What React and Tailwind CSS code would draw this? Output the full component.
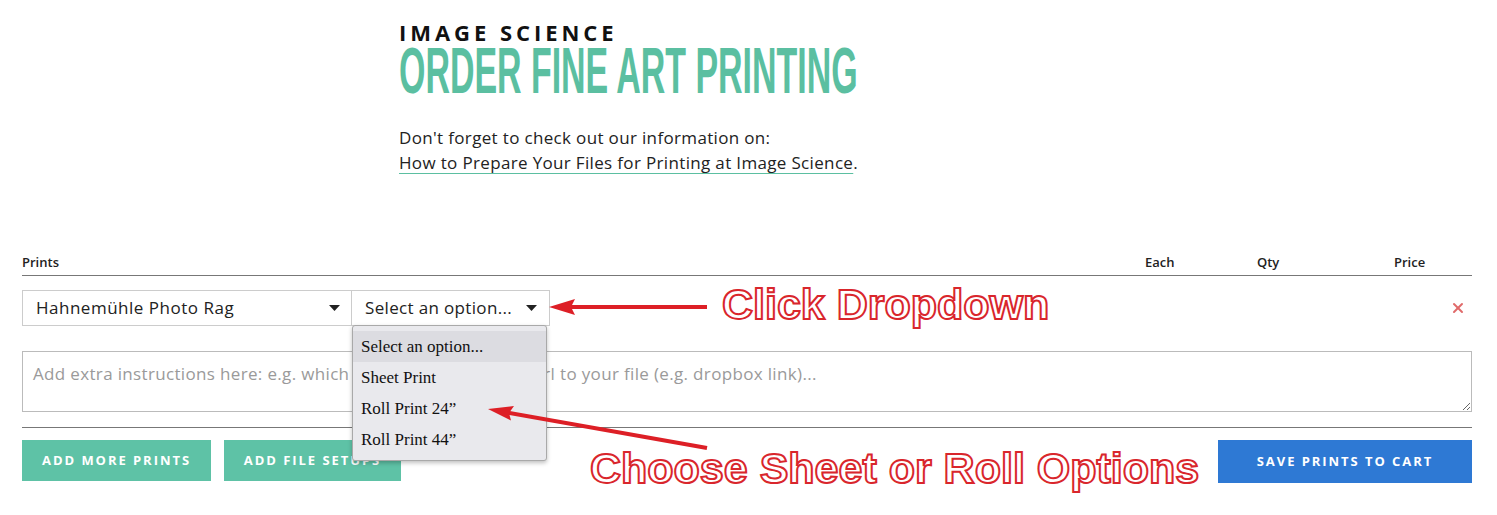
import { X } from 'lucide-react';

const Caret = () => (
  <svg width="11" height="6" viewBox="0 0 11 6" className="shrink-0">
    <path d="M0 0 L11 0 L5.5 6 Z" fill="#222" />
  </svg>
);

const options = ['Select an option...', 'Sheet Print', 'Roll Print 24”', 'Roll Print 44”'];

export default function App() {
  return (
    <div className="relative w-[1497px] h-[515px] overflow-hidden bg-white text-[#222] font-['Open_Sans',sans-serif]">
      {/* page heading */}
      <div className="pl-[399px] pt-[21px]">
        <p className="text-[22px] leading-[22px] font-bold tracking-[0.18em] text-[#111]">IMAGE SCIENCE</p>
        <h1 className="mt-[4px] h-[48px] text-[64px] leading-[48px] font-bold text-[#5bbfa1] font-['Liberation_Sans',sans-serif]">
          <span className="inline-block origin-left scale-x-[0.53] whitespace-nowrap">ORDER FINE ART PRINTING</span>
        </h1>
        <div className="mt-[30px] text-[17px] leading-[25px] tracking-[0.02em]">
          <p>Don't forget to check out our information on:</p>
          <p>
            <a href="#" className="underline decoration-[#5bbfa1] underline-offset-[4px]">
              How to Prepare Your Files for Printing at Image Science
            </a>
            .
          </p>
        </div>
      </div>

      {/* order form */}
      <div className="ml-[22px] mr-[25px] mt-[79px]">
        <div className="flex pb-[5px] border-b border-[#777] text-[13px] leading-[16px] font-semibold">
          <span className="flex-1">Prints</span>
          <span className="w-[112px]">Each</span>
          <span className="w-[137px]">Qty</span>
          <span className="w-[78px]">Price</span>
        </div>

        <div className="mt-[14px] flex items-center">
          <div className="flex h-[36px] w-[330px] items-center justify-between border border-[#ccc] pl-[13px] pr-[11px] text-[17px] tracking-[0.03em]">
            <span>Hahnemühle Photo Rag</span>
            <Caret />
          </div>
          <div className="flex h-[36px] w-[198px] items-center justify-between border border-l-0 border-[#ccc] pl-[13px] pr-[12px] text-[17px] tracking-[0.02em]">
            <span>Select an option...</span>
            <Caret />
          </div>
          <X size={16} strokeWidth={3} className="ml-auto mr-[6px] text-[#e06a6a]" />
        </div>

        <textarea
          className="mt-[25px] block h-[61px] w-full border border-[#bbb] px-[10px] py-[9px] text-[17px] tracking-[0.02em] placeholder:text-[#9a9a9a] outline-none"
          placeholder="Add extra instructions here: e.g. which file setup to use, or a url to your file (e.g. dropbox link)..."
        />

        <div className="mt-[15px] border-t border-[#777]" />

        <div className="mt-[12px] flex items-start">
          <button className="h-[41px] w-[189px] bg-[#5ec2a6] text-[13px] font-bold tracking-[0.15em] text-white">
            ADD MORE PRINTS
          </button>
          <button className="ml-[13px] h-[41px] w-[177px] bg-[#5ec2a6] text-[13px] font-bold tracking-[0.15em] text-white">
            ADD FILE SETUPS
          </button>
          <button className="ml-auto h-[43px] w-[254px] bg-[#2e79d4] text-[13px] font-bold tracking-[0.15em] text-white">
            SAVE PRINTS TO CART
          </button>
        </div>
      </div>

      {/* open dropdown list */}
      <div className="absolute left-[352px] top-[325px] w-[195px] h-[136px] rounded-[3px] border border-[#a9a9a9] bg-[#e9e9ed] pt-[5px] shadow-[0_2px_4px_rgba(0,0,0,0.25)] font-['Liberation_Serif',serif] text-[17px] text-[#111]">
        {options.map((o, i) => (
          <div key={o} className={`flex h-[31px] items-center pl-[8px] ${i === 0 ? 'bg-[#dcdce1]' : ''}`}>
            {o}
          </div>
        ))}
      </div>

      {/* annotation arrows */}
      <svg className="pointer-events-none absolute inset-0" width="1497" height="515">
        <line x1="707" y1="307" x2="570" y2="307" stroke="#dd1f26" strokeWidth="4" />
        <polygon points="549,307 575,299 571,307 575,315" fill="#dd1f26" />
        <line x1="707" y1="448" x2="508" y2="412.6" stroke="#dd1f26" strokeWidth="4" />
        <polygon points="488,409 514,406 509,413 511,420.5" fill="#dd1f26" />
      </svg>

      {/* annotation labels */}
      <div className="absolute left-[722px] top-[283px] whitespace-nowrap text-[43px] leading-none font-bold text-white font-['Liberation_Sans',sans-serif] [-webkit-text-stroke:2px_#d9262c]">
        Click Dropdown
      </div>
      <div className="absolute left-[590px] top-[447px] whitespace-nowrap text-[43px] leading-none font-bold text-white font-['Liberation_Sans',sans-serif] [-webkit-text-stroke:2px_#d9262c]">
        Choose Sheet or Roll Options
      </div>
    </div>
  );
}
